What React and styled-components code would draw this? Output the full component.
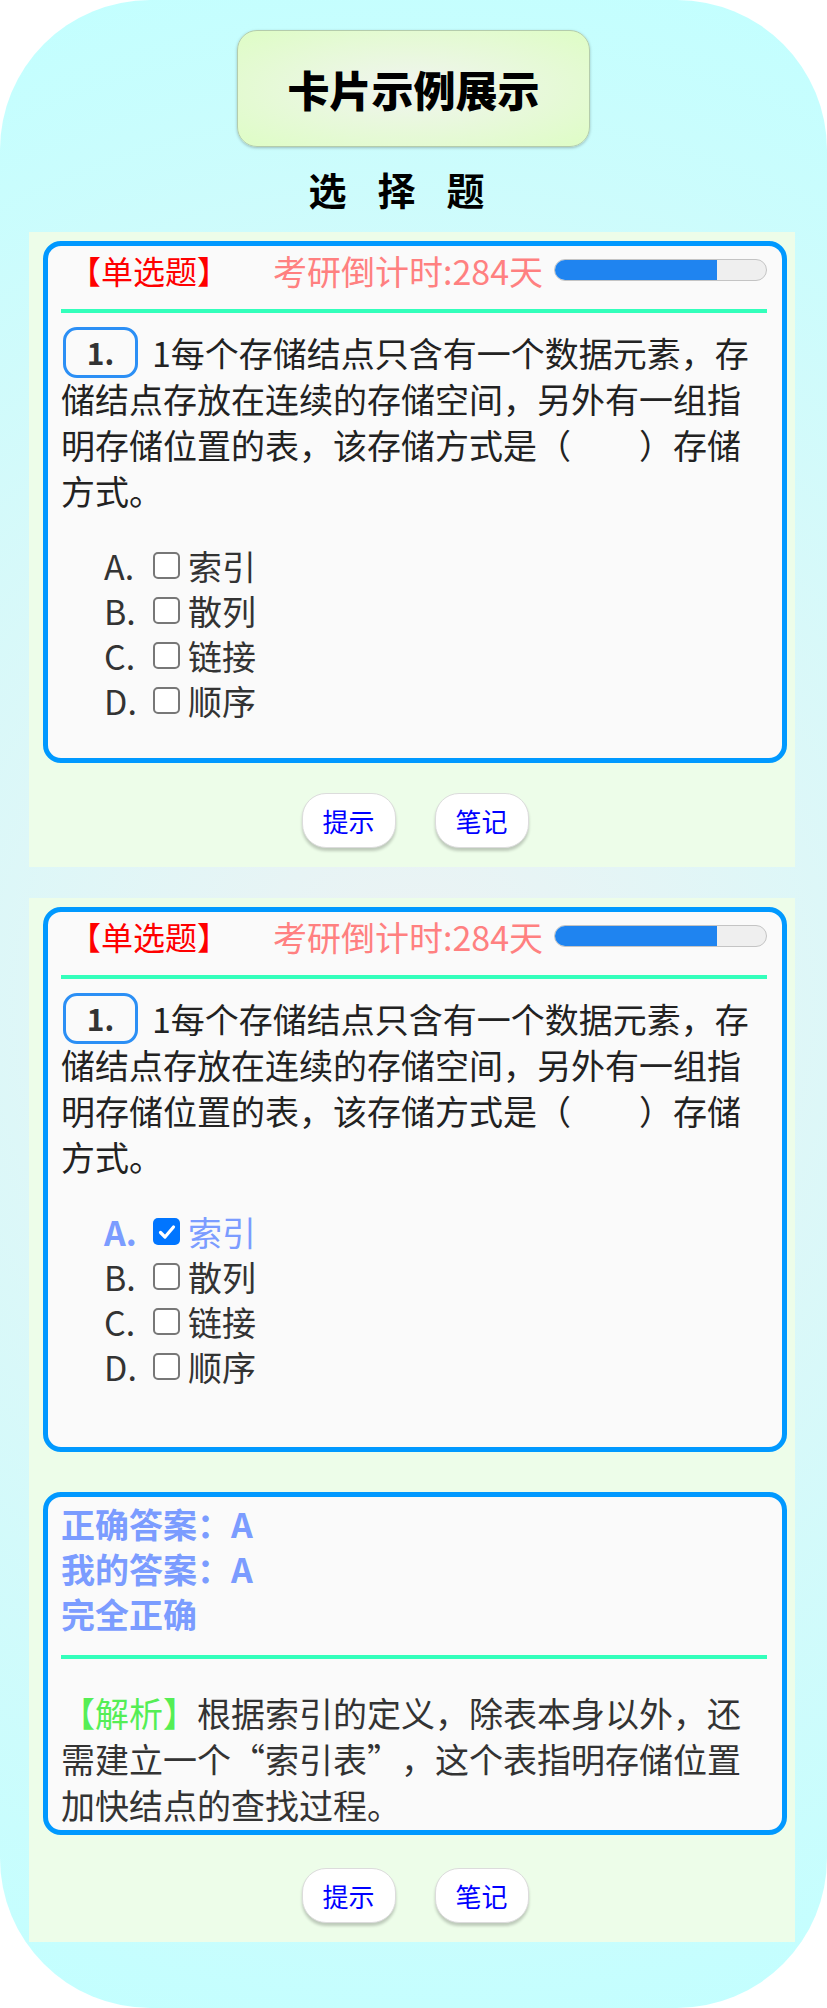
import React from 'react'
import styled, { createGlobalStyle } from 'styled-components'

const GlobalStyle = createGlobalStyle`
  html, body {
    margin: 0;
    padding: 0;
    background: #fff;
  }
  body {
    font-family: "Noto Sans CJK SC", "Noto Sans", sans-serif;
    color: #222;
  }
  * {
    box-sizing: border-box;
  }
`

const Page = styled.div`
  min-height: 2008px;
  padding: 30px 32px 66px 29px;
  border-radius: 150px;
  background: radial-gradient(circle at 50% 50%, #eef2f3 0%, #c2ffff 100%);
  display: flex;
  flex-direction: column;
`

const TitleBox = styled.div`
  align-self: center;
  width: 353px;
  height: 117px;
  margin-left: 3px;
  border-radius: 20px;
  border: 1px solid #b4ccac;
  box-shadow: 0 1px 3px rgba(0, 0, 0, 0.25);
  background: radial-gradient(ellipse at center, #f1f4f0 0%, #defdc5 100%);
  display: flex;
  align-items: center;
  justify-content: center;
  font-size: 42px;
  font-weight: 900;
  color: #000;
`

const SubTitle = styled.div`
  margin: 14px 0 16px;
  height: 55px;
  line-height: 55px;
  text-align: center;
  font-size: 38px;
  font-weight: 700;
  letter-spacing: 31px;
  color: #000;
`

const Panel = styled.div`
  background: #edfde9;
  padding: 9px 8px 19px 14px;
  margin-top: ${p => p.$top || 0}px;
`

const Card = styled.div`
  border: 5px solid #0099ff;
  border-radius: 18px;
  background: #fafafa;
  padding: ${p => p.$pt || 2}px 15px ${p => p.$pb || 0}px 13px;
  margin-top: ${p => p.$mt || 0}px;
`

const Header = styled.div`
  height: 44px;
  display: flex;
  align-items: center;
`

const TypeLabel = styled.span`
  padding-left: 8px;
  font-size: 32px;
  color: #ff0000;
  white-space: nowrap;
`

const Countdown = styled.span`
  margin-left: auto;
  margin-right: 11px;
  font-size: 34px;
  color: #ff8080;
  white-space: nowrap;
`

const Bar = styled.div`
  width: 213px;
  height: 22px;
  flex: none;
  border-radius: 11px;
  border: 1px solid #c4c4c4;
  background: #efefef;
  overflow: hidden;
`

const BarFill = styled.div`
  height: 100%;
  background: #1f84f0;
`

const Divider = styled.div`
  height: 4px;
  background: #33ffbb;
  margin-top: ${p => p.$mt}px;
`

const Question = styled.div`
  margin-top: 17px;
  font-size: 34px;
  line-height: 46px;
  color: #222;
`

const Badge = styled.span`
  display: inline-block;
  vertical-align: top;
  width: 75px;
  height: 51px;
  margin: -3px 14px -5px 2px;
  border: 3px solid #2b8ff5;
  border-radius: 14px;
  text-align: center;
  line-height: 45px;
  font-size: 30px;
  font-weight: 700;
  color: #333;
`

const OptionList = styled.div`
  margin-top: 29px;
  padding-left: 43px;
`

const OptionRow = styled.div`
  height: 45px;
  display: flex;
  align-items: center;
  font-size: 34px;
  line-height: 45px;
  color: ${p => (p.$selected ? '#7b9cff' : '#333')};
`

const Letter = styled.span`
  width: 49px;
  font-weight: ${p => (p.$selected ? 700 : 400)};
`

const Box = styled.span`
  width: 27px;
  height: 27px;
  flex: none;
  margin-right: 8px;
  border-radius: 5px;
  border: ${p => (p.$checked ? 'none' : '2px solid #777')};
  background: ${p => (p.$checked ? '#0075ff' : '#fff')};
  display: flex;
  align-items: center;
  justify-content: center;
`

const AnswerLine = styled.div`
  font-size: 34px;
  line-height: 45px;
  font-weight: 700;
  color: #7b9cff;
`

const Analysis = styled.div`
  margin-top: 31px;
  font-size: 34px;
  line-height: 46px;
  color: #333;
`

const Tag = styled.span`
  color: #55ee55;
`

const Quote = styled.span`
  display: inline-block;
  width: 1em;
  text-align: ${p => (p.$open ? 'right' : 'left')};
`

const ButtonRow = styled.div`
  margin-top: ${p => p.$mt}px;
  display: flex;
  justify-content: center;
  gap: 39px;
`

const Button = styled.button`
  width: 94px;
  height: 55px;
  padding: 0;
  border: 1px solid #dcdcdc;
  border-radius: 24px;
  background: #fff;
  box-shadow: 0 3px 3px rgba(0, 0, 0, 0.2);
  font-family: inherit;
  font-size: 26px;
  color: #0000ff;
  cursor: pointer;
`

const letters = ['A', 'B', 'C', 'D']
const options = ['索引', '散列', '链接', '顺序']

const CheckMark = () => (
  <svg width="20" height="20" viewBox="0 0 20 20">
    <polyline points="3.5,10.5 8,15 16.5,5" fill="none" stroke="#fff" strokeWidth="3.2" strokeLinecap="round" strokeLinejoin="round" />
  </svg>
)

const QuestionCard = ({ selected, pb }) => (
  <Card $pb={pb}>
    <Header>
      <TypeLabel>【单选题】</TypeLabel>
      <Countdown>考研倒计时:284天</Countdown>
      <Bar>
        <BarFill style={{ width: '77%' }} />
      </Bar>
    </Header>
    <Divider $mt={17} />
    <Question>
      <Badge>1.</Badge>
      1每个存储结点只含有一个数据元素，存储结点存放在连续的存储空间，另外有一组指明存储位置的表，该存储方式是（　　）存储方式。
    </Question>
    <OptionList>
      {options.map((opt, i) => (
        <OptionRow key={opt} $selected={selected === i}>
          <Letter $selected={selected === i}>{letters[i]}.</Letter>
          <Box $checked={selected === i}>{selected === i && <CheckMark />}</Box>
          {opt}
        </OptionRow>
      ))}
    </OptionList>
  </Card>
)

const Buttons = ({ mt }) => (
  <ButtonRow $mt={mt}>
    <Button>提示</Button>
    <Button>笔记</Button>
  </ButtonRow>
)

const App = () => (
  <>
    <GlobalStyle />
    <Page>
      <TitleBox>卡片示例展示</TitleBox>
      <SubTitle>选择题</SubTitle>
      <Panel>
        <QuestionCard selected={-1} pb={35} />
        <Buttons mt={30} />
      </Panel>
      <Panel $top={31}>
        <QuestionCard selected={0} pb={58} />
        <Card $mt={40} $pt={4} $pb={2}>
          <AnswerLine>正确答案：A</AnswerLine>
          <AnswerLine>我的答案：A</AnswerLine>
          <AnswerLine>完全正确</AnswerLine>
          <Divider $mt={19} />
          <Analysis>
            <Tag>【解析】</Tag>根据索引的定义，除表本身以外，还需建立一个<Quote $open>“</Quote>索引表<Quote>”</Quote>，这个表指明存储位置加快结点的查找过程。
          </Analysis>
        </Card>
        <Buttons mt={33} />
      </Panel>
    </Page>
  </>
)

export default App
